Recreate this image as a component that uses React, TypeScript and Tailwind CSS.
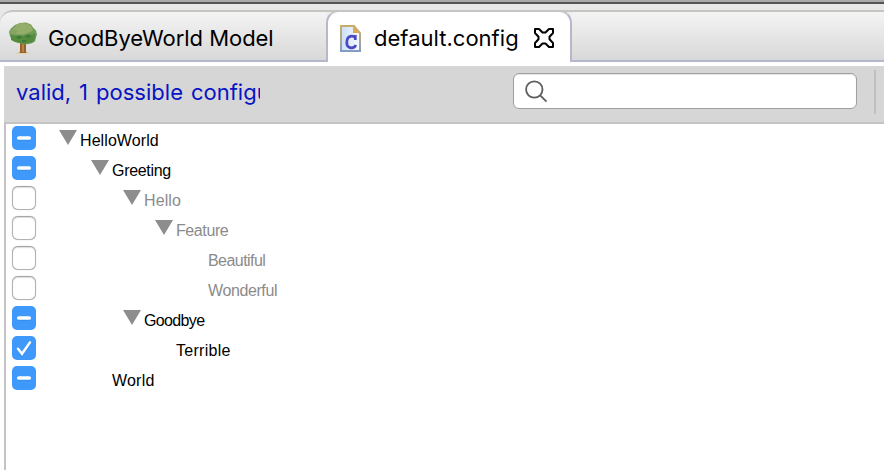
type CheckState = 'partial' | 'checked' | 'empty';

interface Row {
  label: string;
  state: CheckState;
  indent: string;
  expandable?: boolean;
  muted?: boolean;
  spacing: string;
}

const rows: Row[] = [
  { label: 'HelloWorld', state: 'partial', indent: 'ml-6', expandable: true, spacing: 'tracking-[0.08px]' },
  { label: 'Greeting', state: 'partial', indent: 'ml-14', expandable: true, spacing: 'tracking-[-0.3px]' },
  { label: 'Hello', state: 'empty', indent: 'ml-22', expandable: true, muted: true, spacing: 'tracking-[0.1px]' },
  { label: 'Feature', state: 'empty', indent: 'ml-30', expandable: true, muted: true, spacing: 'tracking-[-0.4px]' },
  { label: 'Beautiful', state: 'empty', indent: 'ml-38', muted: true, spacing: 'tracking-[-0.55px]' },
  { label: 'Wonderful', state: 'empty', indent: 'ml-38', muted: true, spacing: 'tracking-[-0.4px]' },
  { label: 'Goodbye', state: 'partial', indent: 'ml-22', expandable: true, spacing: 'tracking-[-0.65px]' },
  { label: 'Terrible', state: 'checked', indent: 'ml-30', spacing: 'tracking-[0.28px]' },
  { label: 'World', state: 'partial', indent: 'ml-14', spacing: 'tracking-[0.2px]' },
];

function TreeIcon() {
  return (
    <svg width="32" height="34" viewBox="0 0 32 34" className="shrink-0">
      <path d="M9 31.3h14v1.6H9z" fill="#ddd2b2" />
      <path d="M13 18h6v13l1 1h-8l1-1z" fill="#95622b" />
      <path d="M15 20h2v11h-2z" fill="#bd8140" />
      <path d="M8 4l5-2 6-.5 5 2 2 3 3 3 1 4-1 3-1 4-4 2-6 1-4-1-4-1-4-2-3-4-1-5 2-3z" fill="#6f9a58" />
      <path d="M11 3l4-1 5 .5 4 2 2 5-4 2-5 2-6 0-7-1 1-4 3-3z" fill="#93ae69" />
      <path d="M4 14l4 1 4-1 4 1 5-2 4 1 3-2v5l-2 4-4 1-5 1-4-1-5-1-4-2z" fill="#558b3e" />
      <path d="M9 16l5-1 1 2-4 1zM18 15l5-1 1 2-4 1zM15 19h5l-2 2h-3z" fill="#3d7c34" />
      <path d="M3 9l4-1 4 2-3 3-5-1z" fill="#86a562" />
    </svg>
  );
}

function FileIcon() {
  return (
    <svg width="24" height="30" viewBox="0 0 24 30" className="shrink-0">
      <defs>
        <linearGradient id="fileEdge" x2="0" y2="1">
          <stop stopColor="#c8ad69" /><stop offset=".55" stopColor="#aaa991" /><stop offset="1" stopColor="#849cc1" />
        </linearGradient>
        <linearGradient id="filePage" x2="1" y2="0">
          <stop stopColor="#cbdff8" /><stop offset="1" stopColor="#f7faff" />
        </linearGradient>
      </defs>
      <path d="M2 2h13l6 7v18H2z" fill="url(#filePage)" stroke="url(#fileEdge)" strokeWidth="2" />
      <path d="M14 2v7h7z" fill="#dda951" />
      <path d="M16.3 11v5M16.3 14.2c-1-2-3-2.4-5-1.8-4 1-5 9-1 11 3 1 5.5 0 6.5-2.4" fill="none" stroke="#4b48c4" strokeWidth="2.7" />
    </svg>
  );
}

function CloseIcon() {
  return (
    <svg width="22" height="22" viewBox="0 0 22 22" className="shrink-0">
      <path d="M2 2h4l3.5 3.5h3L16 2h4v4l-3.500 3.700v2.600L20 16v4h-4l-3.500-3.500h-3L6 20H2v-4l3.500-3.700V9.700L2 6z" fill="#fff" stroke="#000" strokeWidth="2" strokeLinejoin="round" />
    </svg>
  );
}

function Checkbox({ state }: { state: CheckState }) {
  if (state === 'empty') {
    return <span className="h-6 w-6 shrink-0 rounded-[6px] border border-[#b2b2b2] border-t-[#a5a5a5] bg-white shadow-[inset_0_1px_1px_#dedede,0_0_1px_#b8b8b8]" />;
  }
  return (
    <span className="flex h-6 w-6 shrink-0 items-center justify-center rounded-[5px] bg-[#3e99fb]">
      <svg width="24" height="24" viewBox="0 0 24 24" fill="none">
        <path d={state === 'partial' ? 'M6.8 13.2H17.2' : 'M6 13.8l4 5L18 7.4'} stroke="#287bd1" strokeWidth="3" strokeLinecap="round" opacity=".4" />
        <path d={state === 'partial' ? 'M6.8 12H17.2' : 'M6 12.8l4 5L18 6.4'} stroke="#fff" strokeWidth={state === 'partial' ? 3.7 : 2.5} strokeLinecap="round" />
      </svg>
    </span>
  );
}

function TreeRow({ row }: { row: Row }) {
  return (
    <div className="flex h-[30px] items-start pt-0.5 pl-1.5">
      <Checkbox state={row.state} />
      <div className={`${row.indent} flex items-start`}>
        <span className="w-5 pt-1">
          {row.expandable && (
            <svg width="18" height="15" viewBox="0 0 18 15" className="-ml-px block">
              <path d="M0 0h18L9 15z" fill="#8d8d8d" />
            </svg>
          )}
        </span>
        <span className={`pt-[5px] text-[16px] leading-5 whitespace-nowrap ${row.spacing} ${row.muted ? 'text-[#8b8b8b]' : 'text-black'}`}>
          {row.label}
        </span>
      </div>
    </div>
  );
}

export default function App() {
  return (
    <div className="h-[470px] w-[884px] overflow-hidden bg-white font-['Liberation_Sans',Arial,sans-serif]">
      <header className="h-3 border-b-2 border-[#c5c5c1] bg-[#e8e8e8]">
        <div className="h-1 border-b-2 border-[#555558] bg-[#aaaaaa]" />
      </header>
      <nav className="-mt-0.5 flex h-[52px] font-['Inter',sans-serif] text-[22px] text-black">
        <div className="w-[326px] bg-[#e8e8e8]">
          <div className="flex h-full items-start rounded-tl-[13px] border-t-2 border-b-2 border-t-[#c5c5c1] border-b-[#b5b8cd] bg-linear-to-b from-[#f4f4f4] to-[#d8d8d8] pt-[9px] pl-[7px]">
            <TreeIcon />
            <span className="ml-[9px] pt-px leading-8 tracking-[-0.04px] whitespace-nowrap">GoodByeWorld Model</span>
          </div>
        </div>
        <div className="w-[246px] border-t-2 border-[#c5c5c1] bg-[#eeeeee]">
          <div className="-mt-0.5 flex h-[52px] items-start rounded-t-[13px] border-x-2 border-t-2 border-x-[#b5b8cd] border-t-[#c5c5c8] bg-white pt-[11px] pl-[11px]">
            <span className="pt-px"><FileIcon /></span>
            <span className="-mt-0.5 ml-[11px] pt-px leading-8 tracking-[0.02px] whitespace-nowrap">default.config</span>
            <span className="ml-auto pt-[4px] pr-[15px]"><CloseIcon /></span>
          </div>
        </div>
        <div className="flex-1 border-y-2 border-t-[#c5c5c1] border-b-[#b5b8cd] bg-linear-to-b from-[#f4f4f4] to-[#d8d8d8]" />
      </nav>
      <main className="mt-1 ml-1">
        <div className="flex h-[58px] items-start border-b-2 border-[#c4c4c4] bg-[#d6d6d6] pl-3">
          <div className="mt-[10px] w-[244px] overflow-hidden font-['Inter',sans-serif] text-[22px] leading-8 tracking-[0.02px] [word-spacing:1.7px] whitespace-nowrap text-[#0713c4]">
            valid, 1 possible configurations
          </div>
          <div className="mt-[7px] ml-[253px] flex h-9 w-[344px] items-center rounded-[6px] border border-[#9f9f9f] bg-white pl-[11px] shadow-[inset_0_1px_1px_#e6e6e6]">
            <svg width="24" height="24" viewBox="0 0 24 24" fill="none" stroke="#5d5d5d" strokeWidth="1.8">
              <circle cx="9.3" cy="10.5" r="8.2" />
              <path d="M15.2 16.3l6.300 6.300" />
            </svg>
          </div>
          <span className="mt-1 ml-[17px] h-11 w-0.5 bg-[#bfbfbf]" />
        </div>
        <section className="h-[346px] border-l-2 border-[#c4c4c4] bg-white">
          {rows.map((row) => <TreeRow key={row.label} row={row} />)}
        </section>
      </main>
    </div>
  );
}
